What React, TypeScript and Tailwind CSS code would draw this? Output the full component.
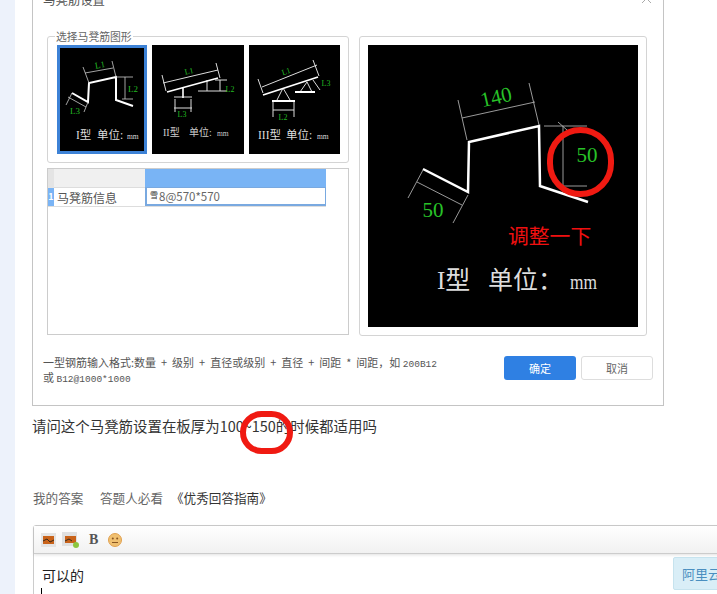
const cjk = "font-['Noto_Sans_CJK_SC','Noto_Sans',sans-serif]";
const serif = "font-['Liberation_Serif','Noto_Sans_CJK_SC',serif]";

function Thumb1() {
  return (
    <svg width="84" height="103" viewBox="3 3 84 103" className={`block ${serif}`}>
      <polyline points="15,48 31,57 32,38 59,32 59,55 76,61" fill="none" stroke="#fff" strokeWidth="2" />
      <path d="M28,28 L56,23 M26,22 L32,38 M55,16 L59,32 M59,32 L76,32 M65,54 L76,54 M68,32 L68,54 M11,52 L29,62 M15,48 L9,60 M31,57 L27,67" stroke="#ccc" strokeWidth="0.8" fill="none" />
      <text x="43" y="23" fontSize="9" fill="#22b822" textAnchor="middle" transform="rotate(-10 43 20)">L1</text>
      <text x="76" y="47" fontSize="9" fill="#22b822" textAnchor="middle">L2</text>
      <text x="18" y="69" fontSize="9" fill="#22b822" textAnchor="middle">L3</text>
      <text x="19" y="94" fontSize="11.5" fill="#ddd">I型<tspan x="40">单位:</tspan><tspan x="70" fontSize="7.5">mm</tspan></text>
    </svg>
  );
}

function Thumb2() {
  return (
    <svg width="92" height="109" viewBox="0 0 92 109" className={`block ${serif}`}>
      <path d="M11,38 L66,25 M10,30 L14,46 M64,18 L68,33 M22,52 L40,52 M46,46 L75,46 M63,35 L75,35 M55,35 L55,46 M68,35 L68,46 M22,63 L40,63 M23,54 L23,67 M39,54 L39,67" stroke="#ddd" strokeWidth="1" fill="none" />
      <path d="M15,47 L66,33 M31,43 L31,53" stroke="#fff" strokeWidth="1.6" fill="none" />
      <text x="37" y="29" fontSize="8" fill="#22b822" textAnchor="middle" transform="rotate(-12 37 26)">L1</text>
      <text x="78" y="47" fontSize="8" fill="#22b822" textAnchor="middle">L2</text>
      <text x="30" y="72" fontSize="8" fill="#22b822" textAnchor="middle">L3</text>
      <text x="11" y="91" fontSize="10" fill="#ccc">II型<tspan x="37">单位:</tspan><tspan x="65" fontSize="7.5">mm</tspan></text>
    </svg>
  );
}

function Thumb3() {
  return (
    <svg width="91" height="109" viewBox="0 0 91 109" className={`block ${serif}`}>
      <path d="M13,42 L68,20 M9,34 L14,48 M64,15 L70,31 M34,43 L28,55 M34,43 L41,55 M58,37 L51,47 M58,37 L63,47 M64,35 L71,45 M24,56 L24,72 M45,56 L45,72 M24,65 L45,65" stroke="#ddd" strokeWidth="1" fill="none" />
      <path d="M14,50 L69,32 M23,56 L46,56 M46,47 L66,47" stroke="#fff" strokeWidth="1.8" fill="none" />
      <text x="37" y="29" fontSize="8" fill="#22b822" textAnchor="middle" transform="rotate(-18 37 26)">L1</text>
      <text x="77" y="41" fontSize="8" fill="#22b822" textAnchor="middle">L3</text>
      <text x="34" y="75" fontSize="8" fill="#22b822" textAnchor="middle">L2</text>
      <text x="9" y="94" fontSize="11.5" fill="#ddd">III型<tspan x="37">单位:</tspan><tspan x="68" fontSize="7.5">mm</tspan></text>
    </svg>
  );
}

function BigDiagram() {
  return (
    <svg width="270" height="282" viewBox="0 0 270 282" className={`block ${serif}`}>
      <polyline points="55,124 100,147 101,97 171,81 172,141 220,157" fill="none" stroke="#fff" strokeWidth="2.5" />
      <path d="M94,73 L167,57 M90,55 L99,95 M161,38 L171,80 M176,81 L219,81 M195,141 L219,141 M195,81 L195,141 M190,77 L199,85 M49,137 L94,160 M55,125 L40,153 M100,150 L85,178" stroke="#aaa" strokeWidth="0.9" fill="none" />
      <text x="128" y="59" fontSize="21" fill="#28c228" textAnchor="middle" transform="rotate(-13 128 52)">140</text>
      <text x="219" y="117" fontSize="21" fill="#28c228" textAnchor="middle">50</text>
      <text x="65" y="172" fontSize="21" fill="#28c228" textAnchor="middle">50</text>
      <text x="69" y="244" fontSize="25" fill="#ddd">I型<tspan x="120">单位：</tspan></text>
      <text x="202" y="244" fontSize="22" fill="#ddd" textLength="27" lengthAdjust="spacingAndGlyphs">mm</text>
    </svg>
  );
}

function ToolbarIcons() {
  return (
    <div className="flex items-center h-full pl-[7px]">
      <svg width="15" height="14" viewBox="0 0 15 14">
        <rect x="0" y="0" width="15" height="14" fill="#e4e4e4" />
        <rect x="2" y="3" width="11" height="8" fill="#c9631a" />
        <path d="M2,8 L6,6 L9,9 L13,7" stroke="#3a2a1a" fill="none" />
      </svg>
      <svg width="18" height="18" viewBox="0 0 18 18" className="ml-[6px]">
        <rect x="0" y="1" width="15" height="14" fill="#e0e0e0" />
        <rect x="3" y="5" width="11" height="7" fill="#c9631a" />
        <path d="M3,10 L7,8 L10,10" stroke="#3a2a1a" fill="none" />
        <circle cx="14" cy="14" r="3" fill="#8cc63f" />
      </svg>
      <span className="ml-[9px] w-[10px] text-[14px] font-bold text-[#555] font-['Liberation_Serif',serif] leading-none">B</span>
      <svg width="14" height="14" viewBox="0 0 14 14" className="ml-[9px]">
        <circle cx="7" cy="7" r="6.5" fill="#f0c070" stroke="#e0a050" />
        <circle cx="4.8" cy="5.5" r="1" fill="#885522" />
        <circle cx="9.2" cy="5.5" r="1" fill="#885522" />
        <path d="M4,9.5 L10,9.5" stroke="#885522" />
      </svg>
    </div>
  );
}

export default function App() {
  return (
    <div className={`relative flex w-[717px] h-[594px] overflow-hidden bg-white ${cjk}`}>
      <div className="w-[15px] shrink-0 bg-[#edf2fb]" />
      <div className="flex-1 min-w-0 pl-[17px]">
        <div className="relative w-[632px] h-[416px] -mt-[10px] border border-[#c4c4c4] border-t-0 px-[14px] bg-white">
          <div className="h-[20px] leading-[20px] text-[12.4px] text-[#555] -ml-[4px]">马凳筋设置</div>
          <svg width="12" height="12" viewBox="0 0 12 12" className="absolute right-[10px] top-[3px]">
            <path d="M1,1 L10,10 M10,1 L1,10" stroke="#aaa" strokeWidth="1" />
          </svg>
          <div className="flex gap-[10px] mt-[26px] h-[300px]">
            <div className="flex flex-col gap-[5px] w-[302px]">
              <div className="relative h-[127px] border border-[#d4d4d4] rounded-[3px] pl-[9px] pt-[8px] flex gap-[5px]">
                <span className="absolute left-[7px] -top-[9px] bg-white px-px text-[10.8px] leading-[16px] text-[#666]">选择马凳筋图形</span>
                <div className="w-[90px] h-[109px] bg-black border-[3px] border-[#3d82d6]"><Thumb1 /></div>
                <div className="w-[92px] h-[109px] bg-black"><Thumb2 /></div>
                <div className="w-[91px] h-[109px] bg-black"><Thumb3 /></div>
              </div>
              <div className="h-[167px] border border-[#ccc]">
                <div className="flex h-[19px] w-[278px]">
                  <div className="w-[6px] bg-[#e4e4e4]" />
                  <div className="w-[91px] bg-[#f0f0f0] border-b border-[#ddd]" />
                  <div className="flex-1 bg-[#79b4f5]" />
                </div>
                <div className="flex h-[19px] w-[278px] border-b border-[#ddd]">
                  <div className="w-[6px] bg-[#7ab4f5] text-white text-[9px] leading-[18px] font-bold text-center">1</div>
                  <div className="w-[91px] pl-[3px] text-[12px] leading-[19px] text-[#555]">马凳筋信息</div>
                  <div className="flex-1 -mt-px border border-[#79a9e0] border-l-2 border-b-2 pl-[3px] text-[11.5px] leading-[18px] text-[#666] flex items-center">
                    <span className="text-[8px] -mt-[3px] mr-px text-[#333]">雪</span>8@570*570
                  </div>
                </div>
              </div>
            </div>
            <div className="w-[288px] border border-[#d4d4d4] rounded-[3px] p-2">
              <div className="w-[270px] h-[282px] bg-black"><BigDiagram /></div>
            </div>
          </div>
          <div className="flex justify-between mt-[20px] -ml-[4px] w-[610px]">
            <div className="text-[11px] leading-[13px] text-[#555] whitespace-pre">
              <div>一型钢筋输入格式:数量 <span className="px-[2.5px]">+</span> 级别 <span className="px-[2.5px]">+</span> 直径或级别 <span className="px-[2.5px]">+</span> 直径 <span className="px-[2.5px]">+</span> 间距 <span className="px-[2.5px]">*</span> 间距，如 <span className="text-[9.5px] font-['Liberation_Mono',monospace]">200B12</span></div>
              <div>或 <span className="text-[9.5px] font-['Liberation_Mono',monospace]">B12@1000*1000</span></div>
            </div>
            <div className="flex gap-[5px]">
              <div className="w-[72px] h-[24px] rounded-[3px] bg-[#2f80e3] text-white text-[11px] leading-[24px] text-center">确定</div>
              <div className="w-[72px] h-[24px] rounded-[3px] border border-[#ddd] text-[#666] text-[11px] leading-[22px] text-center">取消</div>
            </div>
          </div>
        </div>
        <p className="mt-[10px] text-[14.45px] leading-[20px] text-[#333] whitespace-nowrap">请问这个马凳筋设置在板厚为100~150的时候都适用吗</p>
        <div className="mt-[52px] ml-px flex text-[12.6px] leading-[20px] text-[#666] whitespace-nowrap">
          <span className="w-[67px]">我的答案</span>
          <span className="w-[71px]">答题人必看</span>
          <span className="text-[#333]">《优秀回答指南》</span>
        </div>
        <div className="mt-[17px] ml-px w-[720px] h-[120px] border border-[#ccc] rounded-t-[3px]">
          <div className="h-[28px] bg-gradient-to-b from-white to-[#f1f1f1] border-b border-[#ccc] shadow-[0_1px_3px_rgba(0,0,0,0.12)]">
            <ToolbarIcons />
          </div>
          <div className="pl-[8px] pt-[11px] text-[14px] leading-[20px] text-[#222]">可以的</div>
          <div className="ml-[7px] mt-[3px] w-px h-[16px] bg-black" />
        </div>
      </div>

      <div className="absolute left-[508px] top-[221px] text-[20.8px] leading-[28px] text-[#f01010] whitespace-nowrap">调整一下</div>
      <div className="absolute left-[547px] top-[127px] w-[67px] h-[70px] rounded-full border-[6px] border-[#f01a12]" />
      <div className="absolute left-[240px] top-[411px] w-[53px] h-[43px] rounded-full border-[6px] border-[#f01a12]" />
      <div className="absolute left-[673px] top-[557px] w-[60px] h-[33px] rounded-[2px] bg-[#d9eef7] border border-[#c6e3ee] pl-[8px] text-[13px] leading-[31px] text-[#4a8fc0] whitespace-nowrap">阿里云</div>
    </div>
  );
}
